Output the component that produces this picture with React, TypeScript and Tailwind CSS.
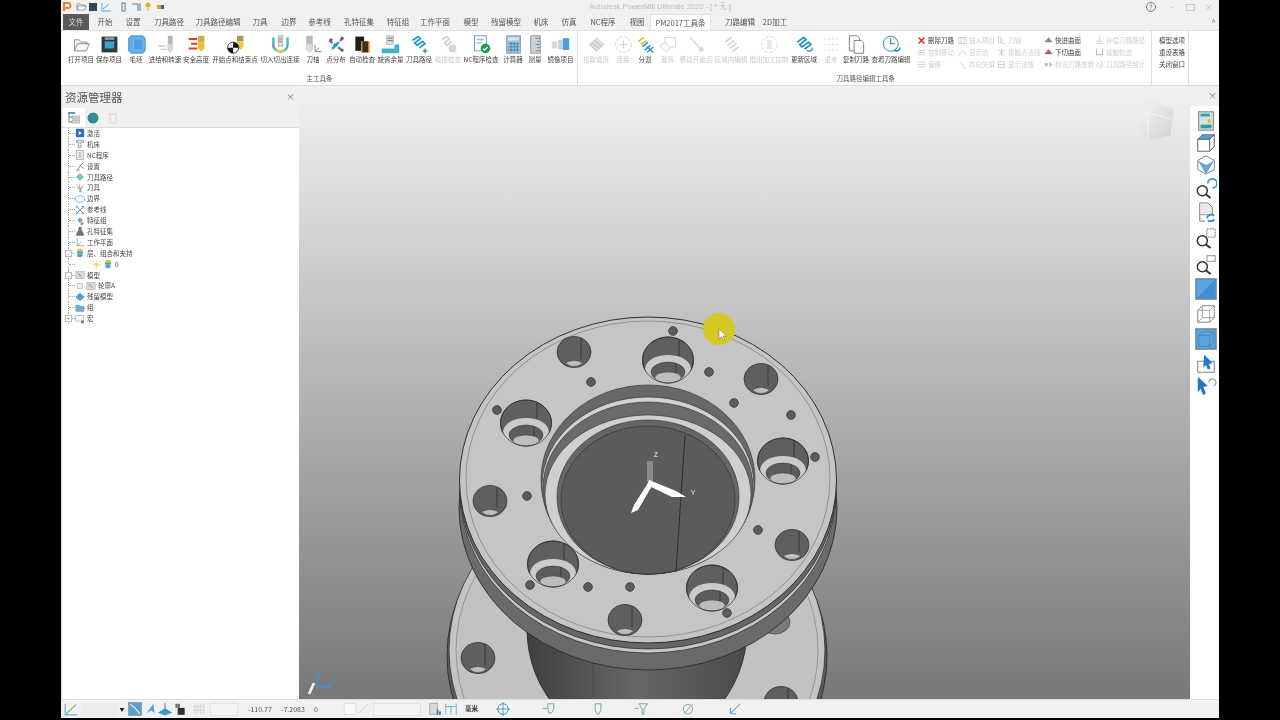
import React from 'react';

const CJK = "font-['Noto_Sans_CJK_SC','Liberation_Sans',sans-serif]";

// small hand drawn glyphs, all on a 24x24 grid
const icons: Record<string, React.ReactNode> = {
  open: <path d="M3 20V6h6l2 3h8v3M3 20l4-9h15l-4 9z" fill="#f6f6f6" stroke="#8a8a8a" strokeWidth="1.2" />,
  save: (
    <>
      <rect x="2" y="2" width="20" height="20" fill="#2b3a42" />
      <rect x="6" y="8" width="12" height="9" fill="#3f9fc4" />
      <rect x="6" y="3" width="12" height="3" fill="#9aa8ae" />
    </>
  ),
  stock: (
    <>
      <path d="M5 1h15l3 3v16l-3 3H5l-3-3V4z" fill="#62ade6" stroke="#3d8fd0" />
      <path d="M8 5h12v14H8z" fill="#4f9fdc" stroke="#86c2ee" />
    </>
  ),
  feed: (
    <>
      <rect x="15" y="1" width="6" height="10" fill="#b5b5b5" />
      <path d="M15 11h6v8l-3 3-3-3z" fill="#d9d9d9" stroke="#aaa" strokeWidth=".5" />
      <path d="M3 14h9M6 18h7" stroke="#c4c4c4" strokeWidth="1.4" />
    </>
  ),
  safe: (
    <>
      <rect x="14" y="1" width="8" height="8" fill="#c9b04a" />
      <path d="M14 9h8v8l-4 4-4-4z" fill="#f0c030" />
      <path d="M2 5h11M5 11h8M2 17h11" stroke="#e2401f" strokeWidth="2.4" />
    </>
  ),
  start: (
    <>
      <rect x="14" y="1" width="8" height="7" fill="#a89a50" />
      <path d="M14 8h8v7l-4 4-4-4z" fill="#f0c838" />
      <circle cx="9" cy="16" r="7" fill="#fff" stroke="#111" />
      <path d="M9 9a7 7 0 0 1 7 7H9zM9 16v7a7 7 0 0 1-7-7z" fill="#111" />
    </>
  ),
  leadin: (
    <>
      <path d="M3 3v9a9 9 0 0 0 18 0V3" fill="none" stroke="#3fb8c8" strokeWidth="3" />
      <path d="M6 20h12" stroke="#d8cc3a" strokeWidth="3" />
      <path d="M3 12v4" stroke="#d86fb4" strokeWidth="3" />
      <rect x="9" y="1" width="6" height="13" fill="#d9d9d9" stroke="#888" strokeWidth=".6" />
      <path d="M10 5h4M10 8h4" stroke="#777" />
    </>
  ),
  axis: (
    <>
      <rect x="3" y="1" width="8" height="10" fill="#b9b9b9" />
      <path d="M3 11h8v7l-4 4-4-4z" fill="#dcdcdc" stroke="#aaa" strokeWidth=".5" />
      <path d="M14 13v8h8" fill="none" stroke="#6b8f5e" strokeWidth="1.2" />
      <path d="M14 21l5-5" stroke="#3d8fd0" strokeWidth="1.2" />
    </>
  ),
  points: (
    <>
      <path d="M3 7l9 7 8 6M20 4l-8 8-7 7" stroke="#2d8fc7" strokeWidth="3" fill="none" strokeDasharray="5 2" />
      <circle cx="5" cy="6" r="2" fill="#c8352a" />
      <circle cx="19" cy="19" r="2" fill="#c8352a" />
      <circle cx="19" cy="4" r="2" fill="#c8352a" />
    </>
  ),
  check: (
    <>
      <path d="M3 2h11v18H3z" fill="#1b1b1b" />
      <path d="M10 8h11v14H10z" fill="#e8821c" />
      <path d="M12 8h7v14h-7z" fill="#3a3020" />
    </>
  ),
  thick: (
    <>
      <rect x="7" y="1" width="9" height="11" fill="#dcdcdc" stroke="#999" strokeWidth=".6" />
      <path d="M8 4h7M8 7h7" stroke="#666" />
      <path d="M1 17h16v-5h6v11H1z" fill="#3fb4c8" />
    </>
  ),
  path: (
    <>
      <path d="M3 7l7-5 3 3-7 5 3 3 7-5 3 3-7 5" fill="none" stroke="#1f9ec4" strokeWidth="2.2" />
      <path d="M19 17v6M16 20h6" stroke="#2f8f4e" strokeWidth="1.6" />
    </>
  ),
  collide: (
    <g opacity=".35">
      <path d="M4 6l6-4 3 3-6 5 3 3 6-5" fill="none" stroke="#777" strokeWidth="2.2" />
      <circle cx="17" cy="17" r="5" fill="#888" />
    </g>
  ),
  nc: (
    <>
      <rect x="3" y="1" width="15" height="19" fill="#fff" stroke="#3d8fa8" />
      <path d="M6 6h9M6 10h6" stroke="#3d8fa8" />
      <circle cx="17" cy="17" r="6" fill="#1f9a4a" />
      <path d="M14 17l2 2 4-4" fill="none" stroke="#fff" strokeWidth="1.5" />
    </>
  ),
  calc: (
    <>
      <rect x="3" y="1" width="18" height="22" fill="#9cc0d8" stroke="#7f9db2" />
      <rect x="5" y="3" width="14" height="4" fill="#d8e6ef" />
      <path d="M5 11h14M5 15h14M5 19h14M9 9v12M13 9v12M17 9v12" stroke="#4f86ad" strokeWidth="1.2" />
    </>
  ),
  measure: (
    <>
      <rect x="6" y="1" width="12" height="22" fill="#c9d2d8" stroke="#7f8a91" />
      <path d="M12 4h6M14 8h4M12 12h6M14 16h4M12 20h6" stroke="#6f7a81" />
    </>
  ),
  mirror: (
    <>
      <rect x="1" y="8" width="7" height="9" fill="#d8d8d8" />
      <rect x="9" y="6" width="6" height="12" fill="#bcd6e8" />
      <rect x="15" y="4" width="8" height="15" fill="#4f9fdc" />
    </>
  ),
  stack: (
    <g opacity=".35">
      <path d="M12 3l10 9-10 9-10-9z" fill="#777" />
      <path d="M8 8l9 8M5 11l9 8M11 5l9 8" stroke="#fff" />
    </g>
  ),
  join: (
    <g opacity=".4">
      <circle cx="12" cy="12" r="10" fill="none" stroke="#777" strokeDasharray="4 2" />
      <path d="M12 7v10M7 12h10" stroke="#777" />
    </g>
  ),
  split: (
    <>
      <path d="M3 8l7-5M6 12l7-5" stroke="#d8c02a" strokeWidth="2" />
      <path d="M8 15l7-6M11 19l7-6" stroke="#1f9ec4" strokeWidth="2" />
      <path d="M14 15l8 7M22 15l-8 7" stroke="#1f7fc4" strokeWidth="1.6" />
    </>
  ),
  trim: (
    <g opacity=".35">
      <rect x="9" y="3" width="13" height="12" fill="none" stroke="#777" />
      <path d="M2 14l7-5 7 8-6 5z" fill="#eee" stroke="#777" />
    </g>
  ),
  move: (
    <g opacity=".3">
      <path d="M4 3l12 13" stroke="#888" strokeWidth="2" />
      <circle cx="18" cy="18" r="3" fill="#777" />
    </g>
  ),
  region: (
    <g opacity=".32">
      <path d="M4 9l8-6M7 13l8-6M10 17l8-6M13 21l8-6" stroke="#666" strokeWidth="2" />
    </g>
  ),
  control: (
    <g opacity=".32">
      <circle cx="12" cy="12" r="10" fill="none" stroke="#666" strokeDasharray="4 2" />
      <path d="M9 6h6v6H9zM7 18l3-6h4l3 6z" fill="#bbb" />
    </g>
  ),
  update: (
    <>
      <path d="M3 9l8-6 3 3-8 6 3 3 8-6 3 3-8 6" fill="none" stroke="#1f8fc4" strokeWidth="2.2" />
      <path d="M15 19a4 4 0 0 0 7-3" fill="none" stroke="#1f8fc4" strokeWidth="1.6" />
    </>
  ),
  redo: (
    <g opacity=".35">
      <path d="M2 5h20M2 12h20M2 19h20" stroke="#888" strokeDasharray="3 2" />
    </g>
  ),
  copy: (
    <>
      <path d="M3 1h10l3 3v16H3z" fill="#fff" stroke="#666" />
      <path d="M9 7h9l3 3v13H9z" fill="#fff" stroke="#666" />
    </>
  ),
  view: (
    <>
      <circle cx="11" cy="11" r="9.5" fill="#f4f8fb" stroke="#3e86a8" strokeWidth="1.2" />
      <path d="M11 4v7h5" fill="none" stroke="#2d7fa8" strokeWidth="1.4" />
      <path d="M15 19a5 5 0 0 0 8-3" fill="none" stroke="#1f8fc4" strokeWidth="2" />
    </>
  ),
  // explorer tree
  tActive: (
    <>
      <rect x="2" y="2" width="20" height="20" rx="3" fill="#2f6fc4" />
      <path d="M9 7l7 5-7 5z" fill="#fff" />
    </>
  ),
  tMachine: <path d="M4 3h16v5H14v13H8V8H4z" fill="#e8eef2" stroke="#6a7f8c" strokeWidth="1.6" />,
  tNc: (
    <>
      <rect x="4" y="1" width="16" height="22" fill="#eef2f5" stroke="#7a8a94" strokeWidth="1.4" />
      <path d="M8 7h8M8 12h8M8 17h8" stroke="#6a8a9e" strokeWidth="1.6" />
    </>
  ),
  tSetup: <path d="M6 22L14 8M12 12l8-8M14 12l7 6M3 22h8" fill="none" stroke="#7d7d7d" strokeWidth="2" />,
  tPath: <path d="M12 3l9 9-9 9-9-9z" fill="#6cc0dc" stroke="#9ad4e6" />,
  tTool: <path d="M3 4l5 9 3-9 2 9 7-9-5 13v5h-4v-5z" fill="#b0b0b0" stroke="#8a8a8a" strokeWidth=".6" />,
  tBoundary: <ellipse cx="12" cy="12" rx="11" ry="8" fill="#f4fafd" stroke="#6fa8c8" strokeWidth="1.6" />,
  tRef: (
    <>
      <path d="M3 3l18 18M21 3L3 21" stroke="#3f8fc4" strokeWidth="2" />
      <path d="M3 8V3h5M21 16v5h-5M16 3h5v5M8 21H3v-5" fill="none" stroke="#3f8fc4" strokeWidth="1.4" />
    </>
  ),
  tFeature: (
    <>
      <path d="M5 10l7-7 7 7-7 7z" fill="#6ea8d8" />
      <circle cx="17" cy="18" r="4" fill="#d89a5a" />
    </>
  ),
  tHole: <path d="M9 3h6v6l5 9v4H4v-4l5-9zM2 22h20" fill="#6d7d66" stroke="#4a5545" />,
  tPlane: <path d="M5 2v19h17M5 21l11-9" fill="none" stroke="#7aa878" strokeWidth="1.8" />,
  tLayer: (
    <>
      <ellipse cx="12" cy="6" rx="7" ry="4" fill="#d8c84a" />
      <rect x="5" y="8" width="14" height="6" fill="#5fae7a" />
      <ellipse cx="12" cy="18" rx="7" ry="4" fill="#4f9fd0" />
    </>
  ),
  tModel: (
    <>
      <rect x="2" y="3" width="20" height="18" fill="#d8d8d8" stroke="#999" />
      <path d="M7 8l8 8" stroke="#777" strokeWidth="2" />
    </>
  ),
  tStock: <path d="M12 2l11 10-11 10L1 12z" fill="#4d9fd6" />,
  tFolder: <path d="M2 20V5h8l2 3h9v12zM5 20l3-8h15l-3 8z" fill="#7ab4da" stroke="#4f8fb8" />,
  tMacro: (
    <>
      <rect x="2" y="3" width="18" height="14" fill="#f2f5f7" stroke="#6a7f8c" />
      <circle cx="18" cy="19" r="4" fill="#4f9f6a" />
    </>
  ),
  tSun: (
    <>
      <circle cx="12" cy="12" r="5" fill="#f0d94a" />
      <path d="M12 1v4M12 19v4M1 12h4M19 12h4M4 4l3 3M17 17l3 3M4 20l3-3M17 7l3-3" stroke="#e0a020" strokeWidth="1.4" />
    </>
  ),
};

type Tool = { label: string; icon: string; w: string; faded?: boolean };

const mainTools: Tool[] = [
  { label: '打开项目', icon: 'open', w: 'w-[30px]' },
  { label: '保存项目', icon: 'save', w: 'w-[26px]' },
  { label: '毛坯', icon: 'stock', w: 'w-[28px]' },
  { label: '进给和转速', icon: 'feed', w: 'w-[30px]' },
  { label: '安全高度', icon: 'safe', w: 'w-[32px]' },
  { label: '开始点和结束点', icon: 'start', w: 'w-[46px]' },
  { label: '切入切出连接', icon: 'leadin', w: 'w-[44px]' },
  { label: '刀轴', icon: 'axis', w: 'w-[22px]' },
  { label: '点分布', icon: 'points', w: 'w-[24px]' },
  { label: '自动检查', icon: 'check', w: 'w-[28px]' },
  { label: '缺省余量', icon: 'thick', w: 'w-[29px]' },
  { label: '刀具路径', icon: 'path', w: 'w-[28px]' },
  { label: '碰撞检查', icon: 'collide', w: 'w-[30px]', faded: true },
  { label: 'NC程序检查', icon: 'nc', w: 'w-[36px]' },
  { label: '计算器', icon: 'calc', w: 'w-[28px]' },
  { label: '测量', icon: 'measure', w: 'w-[16px]' },
  { label: '镜像项目', icon: 'mirror', w: 'w-[35px]' },
];

const editTools: Tool[] = [
  { label: '拾取键页', icon: 'stack', w: 'w-[32px]', faded: true },
  { label: '连接', icon: 'join', w: 'w-[22px]', faded: true },
  { label: '分割', icon: 'split', w: 'w-[22px]' },
  { label: '裁剪', icon: 'trim', w: 'w-[23px]', faded: true },
  { label: '移动开始点', icon: 'move', w: 'w-[34px]', faded: true },
  { label: '区域内编辑', icon: 'region', w: 'w-[36px]', faded: true },
  { label: '指出加工控制', icon: 'control', w: 'w-[40px]', faded: true },
  { label: '更新区域', icon: 'update', w: 'w-[30px]' },
  { label: '重来', icon: 'redo', w: 'w-[24px]', faded: true },
  { label: '复制刀路', icon: 'copy', w: 'w-[26px]' },
  { label: '查看刀路编辑', icon: 'view', w: 'w-[44px]' },
];

const tabs: { label: string; w: string; active?: boolean; file?: boolean }[] = [
  { label: '文件', w: 'w-[26px]', file: true },
  { label: '开始', w: 'w-[28px]' },
  { label: '设置', w: 'w-[28px]' },
  { label: '刀具路径', w: 'w-[44px]' },
  { label: '刀具路径编辑', w: 'w-[54px]' },
  { label: '刀具', w: 'w-[30px]' },
  { label: '边界', w: 'w-[28px]' },
  { label: '参考线', w: 'w-[33px]' },
  { label: '孔特征集', w: 'w-[46px]' },
  { label: '特征组', w: 'w-[32px]' },
  { label: '工作平面', w: 'w-[42px]' },
  { label: '模型', w: 'w-[30px]' },
  { label: '残留模型', w: 'w-[40px]' },
  { label: '机床', w: 'w-[30px]' },
  { label: '仿真', w: 'w-[26px]' },
  { label: 'NC程序', w: 'w-[42px]' },
  { label: '视图', w: 'w-[26px]' },
  { label: 'PM2017工具条', w: 'w-[61px]', active: true },
  { label: '刀路编辑', w: 'w-[58px]' },
  { label: '2D加工', w: 'w-[12px]' },
];

type Small = { label: string; on?: boolean; d: React.ReactNode };
const dim = '#c4c4c4';
const smallRows: Small[][] = [
  [
    { label: '删除刀路', on: true, d: <path d="M2 2l8 8M10 2l-8 8" stroke="#d8281c" strokeWidth="1.8" /> },
    { label: '插入项目', d: <path d="M1 2h10v8H1zM4 2v8M8 2v8" fill="none" stroke={dim} /> },
    { label: '刀轴', d: <path d="M2 1h3v8H2zM7 4v6h4" fill="none" stroke={dim} /> },
    { label: '快进曲面', on: true, d: <path d="M1 8l5-6 5 6z" fill="#4f9fc4" stroke="#c87a6a" strokeWidth=".6" /> },
    { label: '补偿刀路路径', d: <path d="M6 1v6M2 10h8M2 7h8" fill="none" stroke={dim} /> },
  ],
  [
    { label: '控制移动', d: <path d="M1 3h10M1 6h10M1 9h10" stroke={dim} /> },
    { label: '显示点', d: <path d="M1 10L6 3l5 7" fill="none" stroke={dim} /> },
    { label: '接触点法线', d: <path d="M2 2l8 8M10 2l-8 8M6 1v10" stroke={dim} /> },
    { label: '下切曲面', on: true, d: <path d="M1 8l5-6 5 6z" fill="#d0503c" stroke="#3f8fc4" strokeWidth=".6" /> },
    { label: '接触轨迹', d: <path d="M2 1v8h8V1" fill="none" stroke="#b0b8bc" strokeWidth="1.4" /> },
  ],
  [
    { label: '偏移', d: <path d="M1 3h10M1 6h10M1 9h10" stroke={dim} /> },
    { label: '存向矢量', d: <path d="M2 2l5 5M7 7a2 2 0 1 0 3 3" fill="none" stroke={dim} /> },
    { label: '显示法线', d: <path d="M2 2h8v8H2zM2 6h8" fill="none" stroke={dim} /> },
    { label: '标识刀路查看', d: <path d="M1 4h4v4H1zM7 2l4 4-4 4z" fill="#bbb" /> },
    { label: '刀具路径统计', d: <path d="M2 2l8 8M6 2a4 4 0 1 1-4 4" fill="none" stroke={dim} /> },
  ],
];
const smallCols = ['w-[41px]', 'w-[39px]', 'w-[47px]', 'w-[51px]', 'w-[50px]'];

const tree: { label: string; icon: string; depth?: number; box?: string }[] = [
  { label: '激活', icon: 'tActive' },
  { label: '机床', icon: 'tMachine' },
  { label: 'NC程序', icon: 'tNc' },
  { label: '设置', icon: 'tSetup' },
  { label: '刀具路径', icon: 'tPath' },
  { label: '刀具', icon: 'tTool' },
  { label: '边界', icon: 'tBoundary' },
  { label: '参考线', icon: 'tRef' },
  { label: '特征组', icon: 'tFeature' },
  { label: '孔特征集', icon: 'tHole' },
  { label: '工作平面', icon: 'tPlane' },
  { label: '层、组合和夹持', icon: 'tLayer', box: '-' },
  { label: '0', icon: 'tLayer', depth: 1 },
  { label: '模型', icon: 'tModel', box: '-' },
  { label: '轮廓A', icon: 'tModel', depth: 2 },
  { label: '残留模型', icon: 'tStock' },
  { label: '组', icon: 'tFolder' },
  { label: '宏', icon: 'tMacro', box: '+' },
];

const Glyph = ({ name, size = 20 }: { name: string; size?: number }) => (
  <svg width={size} height={size} viewBox="0 0 24 24" className="shrink-0">
    {icons[name]}
  </svg>
);

const RibbonButton = ({ tool }: { tool: Tool }) => (
  <div className={`flex flex-col items-center shrink-0 ${tool.w}`}>
    <div className="h-[20px] flex items-center">
      <Glyph name={tool.icon} size={19} />
    </div>
    <span className={`text-[6.5px] leading-[10px] whitespace-nowrap ${tool.faded ? 'text-[#c8c8c8]' : 'text-[#444]'}`}>
      {tool.label}
    </span>
  </div>
);

const BIG_HOLES = [
  [668, 360],
  [526, 423],
  [783, 461],
  [553, 564],
  [712, 588],
];
const SMALL_HOLES = [
  [574, 352],
  [761, 379],
  [490, 501],
  [792, 545],
  [625, 620],
];
const PINS = [
  [673, 331], [709, 372], [591, 382], [497, 410], [734, 403], [791, 415], [815, 457],
  [527, 496], [758, 530], [530, 585], [588, 587], [630, 587], [727, 613],
];
const RECESS = [
  { top: 385, rx: 107, fill: '#686868' },
  { top: 397, rx: 106, fill: '#d2d2d2' },
  { top: 402, rx: 105, fill: '#6a6a6a' },
  { top: 415, rx: 103, fill: '#cfcfcf' },
  { top: 420, rx: 91, fill: '#666666' },
  { top: 426, rx: 87, fill: '#5b5b5b' },
];

// counterbored hole: dark wall, light step, dark inner wall, light floor
const BigHole = ({ x, y }: { x: number; y: number }) => (
  <g stroke="#2a2a2a" strokeWidth=".7">
    <ellipse cx={x} cy={y} rx="25.5" ry="23" fill="#5f5f5f" />
    <ellipse cx={x} cy={y + 9} rx="23" ry="14" fill="#cbcbcb" strokeWidth="0" />
    <ellipse cx={x} cy={y + 12} rx="17" ry="10" fill="#5c5c5c" strokeWidth=".5" />
    <ellipse cx={x} cy={y + 17.5} rx="13" ry="5.5" fill="#bdbdbd" strokeWidth=".4" />
    <path d={`M${x + 11} ${y - 21}V${y - 4}M${x + 8} ${y + 3}V${y + 13}`} fill="none" />
    <ellipse cx={x} cy={y} rx="25.5" ry="23" fill="none" />
  </g>
);

const SmallHole = ({ x, y }: { x: number; y: number }) => (
  <g stroke="#2a2a2a" strokeWidth=".7">
    <ellipse cx={x} cy={y} rx="17" ry="15.5" fill="#5f5f5f" />
    <path d={`M${x - 9} ${y + 11}Q${x} ${y + 6} ${x + 9} ${y + 11}Q${x} ${y + 18} ${x - 9} ${y + 11}Z`} fill="#bdbdbd" strokeWidth=".4" />
    <path d={`M${x + 7} ${y - 14}V${y + 7}`} fill="none" />
  </g>
);

// the flange part and the model triad, drawn in screen coordinates
const Model = () => (
  <svg viewBox="299 86 891 613" width="891" height="613" className="block">
    <defs>
      <linearGradient id="neck" x1="0" x2="1" y1="0" y2="0">
        <stop offset="0" stopColor="#3f3f3f" />
        <stop offset=".5" stopColor="#676767" />
        <stop offset="1" stopColor="#4a4a4a" />
      </linearGradient>
      <linearGradient id="cube" x1="0" x2="1" y1="0" y2="1">
        <stop offset="0" stopColor="#f6f6f6" />
        <stop offset="1" stopColor="#d0d0d0" />
      </linearGradient>
    </defs>

    {/* view cube */}
    <path d="M1148 101l26 8-3 27-24 5-10-20z" fill="url(#cube)" stroke="#e8e8e8" />
    <path d="M1148 113l23 6M1148 113l-9 8M1148 113v27" stroke="#f4f4f4" fill="none" />

    {/* lower flange */}
    <ellipse cx="637" cy="656" rx="190" ry="172" fill="#5c5c5c" stroke="#222" strokeWidth=".8" />
    <ellipse cx="637" cy="650" rx="188" ry="170" fill="#c4c4c4" stroke="#2c2c2c" strokeWidth=".8" />
    <ellipse cx="637" cy="650" rx="181" ry="164" fill="#c2c2c2" stroke="#777" strokeWidth=".6" />
    <SmallHole x={478} y={658} />
    <SmallHole x={781} y={702} />
    <ellipse cx="775" cy="622" rx="15" ry="12" fill="#7a7a7a" stroke="#333" strokeWidth=".6" />

    {/* neck */}
    <ellipse cx="637" cy="629" rx="110" ry="116" fill="url(#neck)" stroke="#222" strokeWidth=".8" />
    <path d="M593 650V699" stroke="#444" strokeWidth=".6" />

    {/* upper flange */}
    <ellipse cx="648" cy="508" rx="189" ry="162" fill="#6a6a6a" stroke="#222" strokeWidth=".8" />
    <ellipse cx="648" cy="492" rx="188" ry="161" fill="#c6c6c6" stroke="#222" strokeWidth=".7" />
    <ellipse cx="648" cy="488" rx="188" ry="161" fill="#666" stroke="#222" strokeWidth=".7" />
    <ellipse cx="648" cy="480" rx="188.5" ry="163" fill="#c5c5c5" stroke="#1f1f1f" strokeWidth=".9" />
    <ellipse cx="648" cy="479" rx="182" ry="158" fill="none" stroke="#6d6d6d" strokeWidth=".6" />

    {/* centre recess and bore */}
    {RECESS.map((r) => (
      <ellipse key={r.top} cx="648" cy={(r.top + 574) / 2} rx={r.rx} ry={(574 - r.top) / 2} fill={r.fill} stroke="#2a2a2a" strokeWidth=".6" />
    ))}
    <path d="M685 435L676 572" stroke="#222" strokeWidth=".8" />

    {BIG_HOLES.map(([x, y]) => (
      <BigHole key={x} x={x} y={y} />
    ))}
    {SMALL_HOLES.map(([x, y]) => (
      <SmallHole key={x} x={x} y={y} />
    ))}
    {PINS.map(([x, y]) => (
      <circle key={`${x}-${y}`} cx={x} cy={y} r="4.4" fill="#5b5b5b" stroke="#333" strokeWidth=".7" />
    ))}

    {/* workplane triad */}
    <path d="M650 461v21" stroke="#8a8a8a" strokeWidth="6" />
    <path d="M650 480L653 484L638 510L631 513L634 505z" fill="#fff" />
    <path d="M649 480L676 491L686 497L672 497L647 485z" fill="#fff" />
    <text x="656" y="457" fontSize="7" fill="#eee" fontFamily="Liberation Sans" textAnchor="middle">Z</text>
    <text x="693" y="495" fontSize="7" fill="#eee" fontFamily="Liberation Sans" textAnchor="middle">Y</text>

    {/* world triad, bottom left */}
    <path d="M315 685L320 671M315 685L328 688L333 682" stroke="#3f94d0" strokeWidth="1.6" fill="none" />
    <path d="M314 683L309 694" stroke="#f4f4f4" strokeWidth="2.6" />

    {/* recorded cursor */}
    <circle cx="719" cy="329" r="16" fill="#d6c923" />
    <path d="M719 329v10l2.5-2.5 1.5 3.5 1.5-.6-1.5-3.5h3.5z" fill="#fff" stroke="#666" strokeWidth=".5" />
  </svg>
);

const SideIcon = ({ children, h }: { children: React.ReactNode; h: string }) => (
  <div className={`flex items-center justify-center ${h}`}>
    <svg width="22" height="22" viewBox="0 0 24 24">
      {children}
    </svg>
  </div>
);

const Magnifier = () => (
  <>
    <circle cx="8" cy="15" r="5.5" fill="#fff" stroke="#333" strokeWidth="1.6" />
    <path d="M12 19l5 4" stroke="#333" strokeWidth="2.2" />
  </>
);

const BottomIcon = ({ w, children }: { w: string; children: React.ReactNode }) => (
  <div className={`flex items-center justify-center shrink-0 ${w}`}>
    <svg width="14" height="14" viewBox="0 0 24 24">
      {children}
    </svg>
  </div>
);

export default function App() {
  return (
    <div className={`w-[1280px] h-[720px] bg-black overflow-hidden pl-[61px] pr-[61px] ${CJK}`}>
      <div className="w-[1158px] h-[718px] bg-[#f1f1f1] flex flex-col blur-[0.35px]">
        {/* title bar */}
        <div className="h-[14px] flex items-center shrink-0 pl-[1px]">
          <svg width="112" height="12" viewBox="0 0 112 12" className="shrink-0">
            <path d="M2 10V2h4a2 2 0 0 1 0 5H3" fill="none" stroke="#e8842a" strokeWidth="2" />
            <path d="M15 9V3h3l1 1h4v1M15 9l1-4h8l-1 4z" fill="#fff" stroke="#777" strokeWidth=".7" />
            <rect x="27" y="2" width="8" height="8" fill="#3a4650" />
            <path d="M40 2v8h9M41 8l6-5" stroke="#5fa6d0" fill="none" />
            <rect x="60" y="2" width="3" height="8" fill="none" stroke="#5d7e94" />
            <path d="M70 3h6v7M78 2v8" stroke="#4d7fa6" fill="none" />
            <circle cx="86" cy="4" r="2.5" fill="#e8b020" />
            <path d="M86 7v3" stroke="#c89a20" />
            <rect x="95" y="4" width="4" height="4" fill="#d0a030" />
            <rect x="99" y="4" width="3" height="4" fill="#4a6a50" />
          </svg>
          <div className="flex-1 text-center text-[7.5px] leading-[14px] text-[#bcbcbc] whitespace-nowrap font-['Liberation_Sans','Noto_Sans_CJK_SC',sans-serif]">
            Autodesk PowerMill Ultimate 2020 - [ * 无 ]
          </div>
          <div className="flex items-center shrink-0 text-[#bcbcbc] text-[8px] leading-[12px]">
            <span className="w-[10px] h-[10px] mr-[2px] rounded-full border border-[#777] text-[#777] text-[7px] leading-[8px] text-center">?</span>
            <span className="w-[28px] text-center">-</span>
            <span className="w-[9px] h-[7px] border border-[#c8c8c8]" />
            <span className="w-[20px] ml-[4px] text-center">×</span>
          </div>
        </div>

        {/* tabs */}
        <div className="h-[17px] flex items-stretch shrink-0 pl-[2px] border-b border-[#e2e2e2]">
          {tabs.map((t) => (
            <div
              key={t.label}
              className={`flex items-center justify-center shrink-0 whitespace-nowrap text-[7.5px] ${t.w} ${
                t.file ? 'bg-[#5a5a5a] text-[#ddd] mr-[2px]' : t.active ? 'bg-white text-[#555] border-x border-t border-[#e0e0e0]' : 'text-[#555]'
              }`}
            >
              {t.label}
            </div>
          ))}
          <div className="flex-1 flex items-center justify-end pr-[3px] text-[8px] text-[#777]">^</div>
        </div>

        {/* ribbon */}
        <div className="h-[55px] flex shrink-0 bg-white border-b border-[#dcdcdc]">
          <div className="w-[517px] shrink-0 border-r border-[#dedede] flex flex-col pl-[5px] pt-[3px]">
            <div className="flex h-[39px]">
              {mainTools.map((t) => (
                <RibbonButton key={t.label} tool={t} />
              ))}
            </div>
            <div className="text-center text-[6.5px] leading-[10px] text-[#555] pr-[4px]">主工具条</div>
          </div>
          <div className="w-[336px] shrink-0 flex flex-col pl-[2px] pt-[3px]">
            <div className="flex h-[39px]">
              {editTools.map((t) => (
                <RibbonButton key={t.label} tool={t} />
              ))}
            </div>
            <div className="text-right text-[6.5px] leading-[10px] text-[#555] pr-[19px]">刀具路径编辑工具条</div>
          </div>
          <div className="w-[238px] shrink-0 border-r border-[#dedede] flex flex-col pt-[4px] pl-[3px] gap-[2px]">
            {smallRows.map((row, i) => (
              <div key={i} className="flex h-[10px]">
                {row.map((c, j) => (
                  <div key={c.label} className={`flex items-center gap-[2px] shrink-0 ${smallCols[j]}`}>
                    <svg width="9" height="9" viewBox="0 0 12 12" className="shrink-0">
                      {c.d}
                    </svg>
                    <span className={`text-[6.5px] leading-[10px] whitespace-nowrap ${c.on ? 'text-[#444]' : 'text-[#cfcfcf]'}`}>{c.label}</span>
                  </div>
                ))}
              </div>
            ))}
          </div>
          <div className="w-[37px] shrink-0 border-r border-[#dedede] flex flex-col pt-[4px] pl-[7px] gap-[2px] text-[6.5px] leading-[10px] text-[#444] whitespace-nowrap">
            <span>模型选项</span>
            <span>重设表格</span>
            <span>关闭窗口</span>
          </div>
        </div>

        {/* body */}
        <div className="flex-1 flex min-h-0">
          <div className="w-[238px] shrink-0 bg-white flex flex-col border-l border-[#d8d8d8]">
            <div className="h-[41px] shrink-0 bg-[#f0f0f0] flex flex-col">
              <div className="h-[22px] flex items-center justify-between pl-[3px] pr-[4px]">
                <span className="text-[11.5px] text-[#555] leading-[16px]">资源管理器</span>
                <span className="text-[9px] text-[#777]">×</span>
              </div>
              <div className="flex-1 flex items-stretch pl-[1px]">
                <div className="w-[22px] bg-white flex items-center justify-center">
                  <svg width="12" height="12" viewBox="0 0 12 12">
                    <rect x="0" y="0" width="7" height="2" fill="#4d9fd6" />
                    <path d="M1 2v8h3M1 5h3" stroke="#777" fill="none" />
                    <rect x="4" y="4" width="8" height="3" fill="#cfd8de" stroke="#888" strokeWidth=".5" />
                    <rect x="4" y="8" width="8" height="3" fill="#cfd8de" stroke="#888" strokeWidth=".5" />
                  </svg>
                </div>
                <div className="w-[16px] flex items-center justify-center">
                  <svg width="12" height="12" viewBox="0 0 12 12">
                    <circle cx="6" cy="6" r="5.5" fill="#2f8f8f" />
                    <path d="M3 3l5 1-1 4-3-1z" fill="#3a7fc4" />
                  </svg>
                </div>
                <div className="w-[24px] flex items-center justify-center">
                  <svg width="10" height="12" viewBox="0 0 10 12">
                    <path d="M1 2h8M2 2v9h6V2" fill="#f2f2f2" stroke="#d4d4d4" />
                  </svg>
                </div>
              </div>
            </div>
            <div className="flex-1 border-t border-[#dcdcdc]">
              {tree.map((r) => (
                <div key={r.label} className="flex items-center h-[10.9px]">
                  <div className="w-[6px] shrink-0" />
                  <div className="relative w-[7px] h-full shrink-0 border-l border-dotted border-[#aaa] flex items-center">
                    <span className="w-full h-0 border-t border-dotted border-[#aaa]" />
                    {r.box && (
                      <span className="absolute -left-[4px] top-[2px] w-[7px] h-[7px] border border-[#bbb] bg-white text-[6px] leading-[5px] text-center text-[#666]">
                        {r.box}
                      </span>
                    )}
                  </div>
                  {r.depth === 1 && (
                    <>
                      <div className="w-[17px] shrink-0" />
                      <Glyph name="tSun" size={9} />
                      <div className="w-[2px] shrink-0" />
                    </>
                  )}
                  {r.depth === 2 && (
                    <>
                      <div className="w-[2px] shrink-0" />
                      <span className="w-[6px] h-[6px] border border-[#ccc] bg-[#eee] mr-[3px] shrink-0" />
                    </>
                  )}
                  <Glyph name={r.icon} size={10} />
                  <span className="ml-[2px] text-[6.5px] leading-[11px] text-[#444] whitespace-nowrap">{r.label}</span>
                </div>
              ))}
            </div>
          </div>

          <div className="w-[891px] shrink-0 bg-linear-to-b from-[#f2f2f2] to-[#787878] overflow-hidden">
            <Model />
          </div>

          <div className="w-[29px] shrink-0 bg-white flex flex-col items-center">
            <div className="h-[20px] w-full bg-[#f0f0f0] pr-[2px] text-right text-[9px] leading-[20px] text-[#777]">×</div>
            <div className="flex flex-col pt-[3px] pl-[3px]">
              <SideIcon h="h-[23px]">
                <rect x="4" y="2" width="16" height="20" fill="#d8e0e4" stroke="#777" />
                <rect x="6" y="4" width="10" height="3" fill="#2e9fa8" />
                <rect x="6" y="16" width="12" height="4" fill="#2e9fa8" />
                <rect x="14" y="10" width="3" height="4" fill="#d8c02a" />
              </SideIcon>
              <SideIcon h="h-[22px]">
                <path d="M3 8l5-5h13v13l-5 5H3z" fill="#fff" stroke="#555" />
                <path d="M3 8l5-5h13l-5 5z" fill="#4d9fd6" />
                <path d="M3 8h13v13M16 8l5-5" fill="none" stroke="#555" />
              </SideIcon>
              <SideIcon h="h-[22px]">
                <path d="M12 2l9 5v10l-9 5-9-5V7z" fill="#fff" stroke="#777" />
                <path d="M3 7l9 5 9-5-9 15z" fill="#5fa8d8" />
              </SideIcon>
              <SideIcon h="h-[23px]">
                <Magnifier />
                <path d="M14 7a5 5 0 1 1 5 5" fill="none" stroke="#2d8fd0" strokeWidth="1.8" />
              </SideIcon>
              <SideIcon h="h-[26px]">
                <path d="M5 2h9l5 5v8H5zM5 15v7h6" fill="#e8e8e8" stroke="#888" />
                <path d="M13 19a5 5 0 0 1 8-3M21 20a5 5 0 0 1-7 1" fill="none" stroke="#2d8fd0" strokeWidth="2" />
              </SideIcon>
              <SideIcon h="h-[26px]">
                <Magnifier />
                <rect x="13" y="2" width="9" height="9" fill="#fff" stroke="#666" strokeDasharray="2 1" />
              </SideIcon>
              <SideIcon h="h-[25px]">
                <Magnifier />
                <rect x="13" y="3" width="9" height="6" fill="#fff" stroke="#888" />
              </SideIcon>
              <SideIcon h="h-[25px]">
                <rect x="1" y="1" width="22" height="22" fill="#5aa6e4" stroke="#6f7f8a" strokeWidth="1.5" />
                <path d="M2 22L22 2V22z" fill="#3f8fd4" />
              </SideIcon>
              <SideIcon h="h-[25px]">
                <path d="M3 8l5-5h13v13l-5 5H3z" fill="none" stroke="#777" />
                <path d="M3 8h13v13M16 8l5-5M8 3v13h13M8 16l-5 5" fill="none" stroke="#999" />
              </SideIcon>
              <SideIcon h="h-[26px]">
                <rect x="1" y="1" width="22" height="22" fill="#5aa6e4" stroke="#6f7f8a" strokeWidth="1.5" />
                <path d="M4 8l4-4h12v12l-4 4H4zM4 8h12v12M16 8l4-4" fill="none" stroke="#4a86b8" />
              </SideIcon>
              <SideIcon h="h-[24px]">
                <rect x="3" y="9" width="18" height="12" fill="#fff" stroke="#777" />
                <path d="M10 2l9 9-4 1 2 5-3 1-2-5-3 3z" fill="#1f78c8" />
              </SideIcon>
              <SideIcon h="h-[20px]">
                <path d="M3 2l11 10-5 1 3 7-3 2-3-7-3 4z" fill="#1f78c8" />
                <path d="M15 8a4 4 0 1 1 5 4" fill="none" stroke="#777" />
              </SideIcon>
            </div>
          </div>
        </div>

        {/* status bar */}
        <div className="h-[19px] shrink-0 flex items-center bg-[#f1f1f1] border-t border-[#dcdcdc] text-[7px] text-[#555] whitespace-nowrap pl-[1px]">
          <BottomIcon w="w-[18px]">
            <path d="M2 3v19h20" fill="none" stroke="#67b3dc" strokeWidth="2" />
            <path d="M3 21L21 4" stroke="#7ab878" strokeWidth="2" />
          </BottomIcon>
          <div className="w-[37px] h-[13px] ml-[1px] bg-[#ececec] shrink-0" />
          <span className="w-[8px] text-center text-[5px] text-[#222] shrink-0">▼</span>
          <div className="w-[1px] shrink-0" />
          <BottomIcon w="w-[16px]">
            <rect x="1" y="1" width="22" height="22" fill="#5a9fc8" stroke="#6a8aa0" />
            <path d="M4 4l8 6 8 10" stroke="#dff0f8" strokeWidth="2" fill="none" />
          </BottomIcon>
          <BottomIcon w="w-[15px]">
            <path d="M4 20L16 3l2 16-6-5z" fill="#4d9fd6" />
          </BottomIcon>
          <BottomIcon w="w-[14px]">
            <path d="M12 2v10M2 18l10-6 10 6-10 4z" fill="#3f97d0" stroke="#3f97d0" strokeWidth="2" />
          </BottomIcon>
          <BottomIcon w="w-[15px]">
            <rect x="8" y="10" width="12" height="12" fill="#333" />
            <path d="M4 3h8v7H4z" fill="#777" />
          </BottomIcon>
          <div className="w-[1px] shrink-0" />
          <BottomIcon w="w-[22px]">
            <path d="M5 3v18M10 3v18M15 3v18M20 3v18M2 8h20M2 14h20" stroke="#d2d2d2" strokeWidth="1.4" />
          </BottomIcon>
          <div className="w-[28px] h-[13px] shrink-0 border border-[#e2e2e2] bg-[#f4f4f4]" />
          <span className="ml-[10px] w-[33px] shrink-0">-110.77</span>
          <span className="w-[33px] shrink-0">-7.2083</span>
          <span className="w-[14px] shrink-0">0</span>
          <div className="w-[15px] shrink-0" />
          <BottomIcon w="w-[14px]">
            <rect x="2" y="3" width="20" height="18" fill="#f8f8f8" stroke="#d0d0d0" />
          </BottomIcon>
          <BottomIcon w="w-[13px]">
            <path d="M3 20L20 4" stroke="#dcdcdc" strokeWidth="2" />
          </BottomIcon>
          <div className="w-[48px] h-[13px] ml-[3px] shrink-0 border border-[#e2e2e2] bg-[#f4f4f4]" />
          <div className="w-[6px] shrink-0" />
          <BottomIcon w="w-[15px]">
            <rect x="3" y="2" width="13" height="19" fill="#d8d8d8" stroke="#888" />
            <rect x="15" y="13" width="3" height="9" fill="#2d7fb8" />
            <rect x="19" y="16" width="3" height="6" fill="#2d7fb8" />
          </BottomIcon>
          <BottomIcon w="w-[17px]">
            <path d="M3 3v18M21 3v18M12 7v14M3 8h18" stroke="#3fa0c8" strokeWidth="1.6" strokeDasharray="3 1" />
          </BottomIcon>
          <span className="ml-[6px] w-[14px] shrink-0 text-[6.5px] text-[#333] font-semibold">毫米</span>
          <div className="w-[16px] shrink-0" />
          <BottomIcon w="w-[16px]">
            <circle cx="12" cy="12" r="9" fill="none" stroke="#3f94b8" strokeWidth="1.6" />
            <path d="M12 0v24M0 12h24" stroke="#3f94b8" strokeWidth="1.4" />
          </BottomIcon>
          <div className="w-[30px] shrink-0" />
          <BottomIcon w="w-[16px]">
            <path d="M10 3h10v10l-4 6h-4l-2-6zM1 11h7" fill="none" stroke="#5fa4b8" strokeWidth="1.6" />
          </BottomIcon>
          <div className="w-[33px] shrink-0" />
          <BottomIcon w="w-[16px]">
            <path d="M7 3h10v10l-3 7h-4l-3-7z" fill="none" stroke="#5fa4b8" strokeWidth="1.6" />
          </BottomIcon>
          <div className="w-[27px] shrink-0" />
          <BottomIcon w="w-[16px]">
            <path d="M9 3h14l-6 9v9h-3v-9zM1 11h7" fill="none" stroke="#5fa4b8" strokeWidth="1.6" />
          </BottomIcon>
          <div className="w-[31px] shrink-0" />
          <BottomIcon w="w-[16px]">
            <circle cx="12" cy="12" r="8" fill="none" stroke="#6fa8bc" strokeWidth="1.6" />
            <path d="M5 20L20 4" stroke="#6fa8bc" strokeWidth="1.6" />
          </BottomIcon>
          <div className="w-[31px] shrink-0" />
          <BottomIcon w="w-[16px]">
            <path d="M21 3L4 20M4 10v10h10" fill="none" stroke="#6fa8bc" strokeWidth="1.8" />
          </BottomIcon>
        </div>
      </div>
    </div>
  );
}
